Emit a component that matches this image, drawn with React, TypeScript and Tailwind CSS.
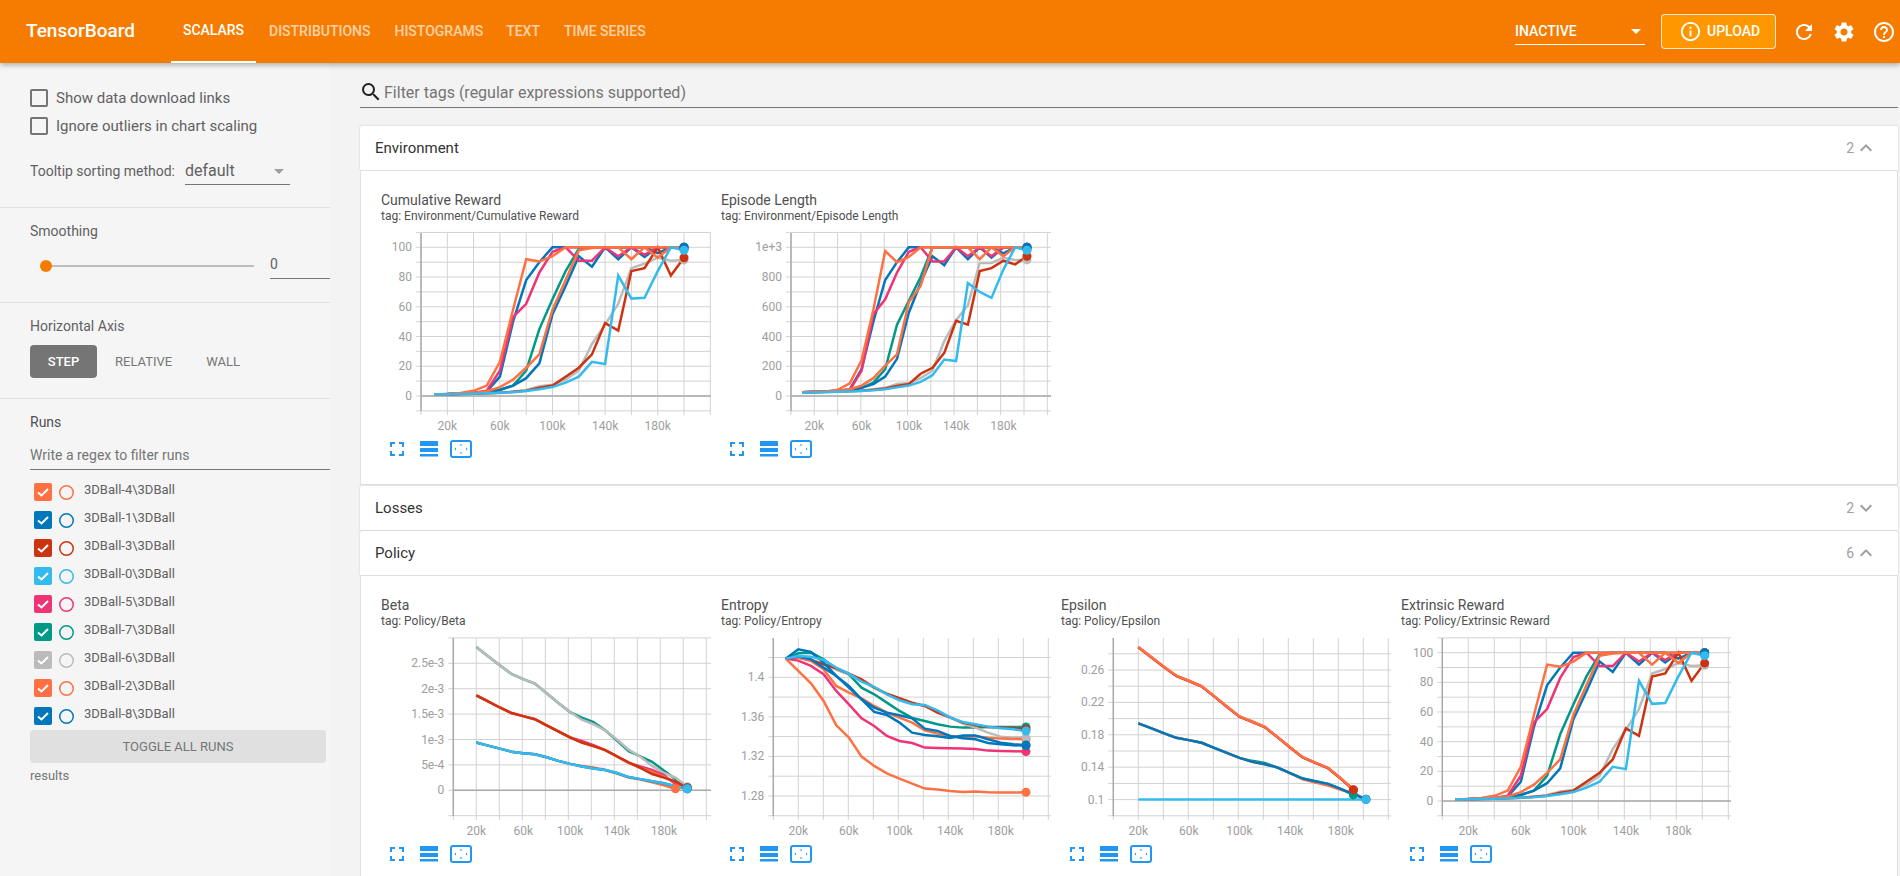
import { MdExpandLess, MdExpandMore, MdHelpOutline, MdInfoOutline, MdRefresh, MdSearch, MdSettings } from "react-icons/md";

const ORANGE = "#ff7043";
const BLUE = "#0077bb";
const RED = "#cc3311";
const CYAN = "#33bbee";
const PINK = "#ee3377";
const TEAL = "#009988";
const GRAY = "#bbbbbb";

const RUNS = [
  { name: "3DBall-4\\3DBall", color: ORANGE },
  { name: "3DBall-1\\3DBall", color: BLUE },
  { name: "3DBall-3\\3DBall", color: RED },
  { name: "3DBall-0\\3DBall", color: CYAN },
  { name: "3DBall-5\\3DBall", color: PINK },
  { name: "3DBall-7\\3DBall", color: TEAL },
  { name: "3DBall-6\\3DBall", color: GRAY },
  { name: "3DBall-2\\3DBall", color: ORANGE },
  { name: "3DBall-8\\3DBall", color: BLUE },
];

// end dots overlap, this is the stacking from bottom to top
const DOT_ORDER = [ORANGE, PINK, GRAY, TEAL, RED, BLUE, CYAN];

type Series = { c: string; d: number[]; s?: number };

type ChartProps = {
  title: string;
  tag: string;
  axisX: number;
  x20: number;
  step: number;
  y: (v: number) => number;
  grid: number[];
  ticks: [number, string][];
  zero?: boolean;
  series: Series[];
};

const reward: Series[] = [
  { c: GRAY, d: [1, 1.1, 1.3, 1.5, 1.8, 2.2, 2.8, 4, 6.5, 7.5, 11, 17, 35, 48, 62, 86, 89, 93, 91, 91.5] },
  { c: TEAL, d: [1, 1.2, 1.5, 1.8, 2.5, 4, 7, 17, 45, 65, 84, 99, 100, 100, 100, 100, 100, 100, 100, 100] },
  { c: BLUE, d: [1, 1.2, 1.5, 1.8, 2.5, 4.2, 7, 12, 22, 55, 74, 94, 87, 100, 92, 100, 93.5, 100, 100, 99] },
  { c: BLUE, d: [1, 1.3, 1.8, 2.2, 3, 13, 50, 78, 90, 100, 100, 100, 100, 100, 100, 100, 100, 96, 100, 100] },
  { c: PINK, d: [1, 1.3, 1.7, 2, 3.5, 17, 53, 62, 83, 97, 100, 91, 91, 100, 94, 100, 95, 100, 100, 100] },
  { c: RED, d: [1, 1.1, 1.3, 1.5, 1.8, 2.2, 2.8, 3.5, 5.5, 7, 13, 19, 28, 49, 44, 84, 86, 100, 81, 93] },
  { c: ORANGE, d: [1, 1.2, 1.6, 2, 3, 6, 11, 19, 28, 58, 78, 98, 99.5, 100, 100, 92, 100, 93, 100, 100] },
  { c: ORANGE, d: [1, 1.3, 2, 3.5, 7, 23, 58, 92, 90.5, 94, 100, 100, 100, 100, 100, 100, 100, 100, 100, 100] },
  { c: CYAN, d: [1, 1.1, 1.3, 1.5, 1.8, 2.2, 2.6, 3.3, 4.5, 6, 9, 13, 23, 21.5, 81, 65.5, 66, 84, 100, 98] },
];

const episode: Series[] = [
  { c: GRAY, d: [25, 26, 28, 30, 33, 36, 45, 55, 80, 85, 120, 170, 370, 510, 610, 895, 895, 930, 915, 915] },
  { c: TEAL, d: [25, 27, 30, 33, 40, 55, 90, 180, 480, 640, 800, 1000, 1000, 1000, 1000, 1000, 1000, 1000, 1000, 1000] },
  { c: BLUE, d: [25, 27, 30, 33, 38, 55, 80, 130, 250, 560, 760, 940, 880, 1000, 920, 1000, 930, 1000, 1000, 990] },
  { c: BLUE, d: [25, 28, 30, 35, 45, 180, 500, 780, 900, 1000, 1000, 1000, 1000, 1000, 1000, 1000, 1000, 960, 1000, 1000] },
  { c: PINK, d: [25, 28, 30, 35, 40, 170, 550, 650, 830, 970, 1000, 905, 905, 1000, 940, 1000, 940, 1000, 1000, 1000] },
  { c: RED, d: [25, 26, 28, 30, 33, 36, 42, 50, 68, 80, 150, 190, 290, 505, 480, 840, 860, 910, 885, 940] },
  { c: ORANGE, d: [25, 27, 30, 33, 45, 70, 120, 205, 280, 630, 740, 1000, 1000, 1000, 1000, 920, 1000, 940, 1000, 990] },
  { c: ORANGE, d: [25, 28, 30, 42, 85, 240, 580, 975, 900, 935, 1000, 1000, 1000, 1000, 1000, 1000, 1000, 1000, 1000, 1000] },
  { c: CYAN, d: [22, 24, 26, 28, 30, 33, 38, 45, 58, 70, 95, 140, 245, 235, 760, 700, 660, 850, 1000, 980] },
];

const betaA = [2.82, 2.64, 2.46, 2.29, 2.19, 2.1, 1.91, 1.72, 1.54, 1.43, 1.34, 1.18, 0.98, 0.77, 0.67, 0.56, 0.39, 0.22, 0.05];
const betaB = [1.87, 1.75, 1.63, 1.52, 1.46, 1.4, 1.28, 1.16, 1.04, 0.94, 0.87, 0.79, 0.67, 0.55, 0.44, 0.32, 0.25, 0.17, 0.05];
const betaC = [0.94, 0.88, 0.82, 0.76, 0.73, 0.71, 0.65, 0.58, 0.52, 0.47, 0.43, 0.4, 0.34, 0.26, 0.22, 0.18, 0.14, 0.08, 0.03];

const beta: Series[] = [
  { c: TEAL, s: 2, d: betaA },
  { c: GRAY, s: 2, d: [2.82, 2.64, 2.46, 2.29, 2.19, 2.1, 1.91, 1.72, 1.54, 1.39, 1.3, 1.18, 1.0, 0.8, 0.66, 0.48, 0.34, 0.25, 0.07] },
  { c: PINK, s: 2, d: [1.87, 1.75, 1.63, 1.52, 1.46, 1.4, 1.28, 1.16, 1.04, 0.97, 0.89, 0.79, 0.67, 0.54, 0.47, 0.4, 0.3, 0.12, 0.03] },
  { c: ORANGE, s: 2, d: [1.87, 1.75, 1.63, 1.52, 1.46, 1.4, 1.28, 1.16, 1.04, 0.94, 0.87, 0.79, 0.66, 0.54, 0.44, 0.36, 0.27, 0.16, 0.04] },
  { c: RED, s: 2, d: betaB },
  { c: ORANGE, s: 2, d: [0.94, 0.88, 0.82, 0.76, 0.73, 0.71, 0.65, 0.58, 0.52, 0.48, 0.45, 0.4, 0.33, 0.25, 0.21, 0.16, 0.1, 0.03] },
  { c: BLUE, s: 2, d: betaC },
  { c: CYAN, s: 2, d: betaC },
];

// entropy and epsilon curves were read off the plot, so they go through the axis scale
const ent = (ys: number[]) => ys.map((y) => 1.4 - ((y - 259) / 118.7) * 0.04);
const entropy: Series[] = [
  { c: TEAL, d: ent([203, 187, 185, 205, 235, 250, 290, 310, 335, 360, 381, 390, 400, 407, 410, 410, 408, 408, 408, 408]) },
  { c: GRAY, d: ent([203, 198, 205, 220, 235, 250, 270, 290, 310, 325, 338, 345, 360, 378, 398, 410, 425, 437, 440, 440]) },
  { c: RED, d: ent([203, 200, 208, 220, 232, 248, 265, 290, 308, 322, 335, 345, 365, 380, 395, 403, 408, 410, 412, 415]) },
  { c: ORANGE, d: ent([203, 200, 210, 235, 285, 305, 322, 345, 365, 380, 395, 418, 428, 435, 438, 436, 440, 443, 444, 445]) },
  { c: PINK, d: ent([203, 209, 225, 250, 300, 340, 382, 405, 435, 450, 456, 470, 471, 472, 473, 474, 479, 480, 481, 482]) },
  { c: BLUE, d: ent([203, 197, 205, 230, 255, 285, 325, 350, 365, 373, 382, 413, 420, 435, 442, 445, 456, 460, 463, 464]) },
  { c: BLUE, d: ent([203, 175, 183, 215, 255, 290, 325, 363, 372, 395, 425, 432, 436, 441, 434, 434, 445, 455, 460, 462]) },
  { c: ORANGE, d: ent([203, 240, 277, 330, 403, 440, 497, 525, 547, 563, 578, 593, 596, 600, 603, 602, 604, 605, 605, 604]) },
  { c: CYAN, d: ent([203, 195, 197, 207, 230, 248, 272, 288, 310, 328, 340, 342, 358, 380, 393, 400, 407, 412, 415, 420]) },
];

const eps = (ys: number[]) => ys.map((y) => 0.1 + ((626 - y) / 97) * 0.04);
const epsTop = eps([170, 199, 228, 256, 271, 287, 317, 348, 378, 393, 409, 439, 470, 500, 516, 532, 563, 597]);
const epsMid = eps([398, 412, 427, 441, 448, 456, 471, 486, 501, 513, 520, 530, 547, 563, 571, 579, 594, 610, 625]);
const epsilon: Series[] = [
  { c: TEAL, s: 2, d: eps([398, 412, 427, 441, 448, 456, 471, 486, 501, 510, 516, 530, 547, 563, 571, 579, 594, 612]) },
  { c: ORANGE, s: 2, d: eps([398, 412, 427, 441, 448, 456, 471, 486, 501, 513, 520, 530, 547, 565, 575, 584, 597, 606, 625]) },
  { c: BLUE, s: 2, d: epsMid },
  { c: PINK, s: 2, d: epsTop },
  { c: RED, s: 2, d: epsTop },
  { c: ORANGE, s: 2, d: epsTop.map((v) => v + 0.0003) },
  { c: CYAN, s: 2, d: new Array(19).fill(0.1) },
];

const range = (from: number, to: number, by: number) => {
  const out: number[] = [];
  for (let v = from; v <= to + 1e-9; v += by) out.push(v);
  return out;
};

const CHARTS_ENV: ChartProps[] = [
  {
    title: "Cumulative Reward",
    tag: "tag: Environment/Cumulative Reward",
    axisX: 40,
    x20: 66.3,
    step: 13.15,
    y: (v) => 14.3 + (100 - v) * 1.487,
    grid: range(-10, 110, 10),
    ticks: [[100, "100"], [80, "80"], [60, "60"], [40, "40"], [20, "20"], [0, "0"]],
    zero: true,
    series: reward,
  },
  {
    title: "Episode Length",
    tag: "tag: Environment/Episode Length",
    axisX: 70,
    x20: 93.3,
    step: 11.815,
    y: (v) => 14.3 + (1000 - v) * 0.1487,
    grid: range(-100, 1100, 100),
    ticks: [[1000, "1e+3"], [800, "800"], [600, "600"], [400, "400"], [200, "200"], [0, "0"]],
    zero: true,
    series: episode,
  },
];

const CHARTS_POLICY: ChartProps[] = [
  {
    title: "Beta",
    tag: "tag: Policy/Beta",
    axisX: 72.3,
    x20: 95.3,
    step: 11.72,
    y: (v) => 25.3 + (2.5 - v) * 50.8,
    grid: range(-0.5, 3, 0.5),
    ticks: [[2.5, "2.5e-3"], [2, "2e-3"], [1.5, "1.5e-3"], [1, "1e-3"], [0.5, "5e-4"], [0, "0"]],
    zero: true,
    series: beta,
  },
  {
    title: "Entropy",
    tag: "tag: Policy/Entropy",
    axisX: 52.3,
    x20: 77.3,
    step: 12.65,
    y: (v) => 39.3 + (1.4 - v) * 989,
    grid: range(1.26, 1.42, 0.02),
    ticks: [[1.4, "1.4"], [1.36, "1.36"], [1.32, "1.32"], [1.28, "1.28"]],
    series: entropy,
  },
  {
    title: "Epsilon",
    tag: "tag: Policy/Epsilon",
    axisX: 52.3,
    x20: 77.3,
    step: 12.65,
    y: (v) => 32 + (0.26 - v) * 810,
    grid: range(0.08, 0.28, 0.02),
    ticks: [[0.26, "0.26"], [0.22, "0.22"], [0.18, "0.18"], [0.14, "0.14"], [0.1, "0.1"]],
    series: epsilon,
  },
  {
    title: "Extrinsic Reward",
    tag: "tag: Policy/Extrinsic Reward",
    axisX: 41.3,
    x20: 67.3,
    step: 13.13,
    y: (v) => 14.7 + (100 - v) * 1.483,
    grid: range(-10, 110, 10),
    ticks: [[100, "100"], [80, "80"], [60, "60"], [40, "40"], [20, "20"], [0, "0"]],
    zero: true,
    series: reward,
  },
];

const Caret = ({ className }: { className: string }) => (
  <svg width="10" height="5" viewBox="0 0 10 5" className={className}>
    <path d="M0 0h10L5 5z" fill="currentColor" />
  </svg>
);

const ChartIcons = () => (
  <div className="flex items-center h-[18px] pl-[9px] text-[#2196f3]">
    <svg width="14" height="14" viewBox="0 0 14 14" fill="none" stroke="currentColor" strokeWidth="2">
      <path d="M1 5V1h4M9 1h4v4M13 9v4H9M5 13H1V9" />
    </svg>
    <svg width="18" height="16" viewBox="0 0 18 16" fill="currentColor" className="ml-4">
      <rect width="18" height="5" />
      <rect y="7" width="18" height="4" />
      <rect y="13" width="18" height="2.5" />
    </svg>
    <svg width="22" height="18" viewBox="0 0 22 18" fill="none" className="ml-3">
      <rect x="1" y="1" width="20" height="16" rx="2" stroke="currentColor" strokeWidth="2" />
      <path d="M11 4l1.5 1.5h-3zM11 14l1.5-1.5h-3zM4.5 9L6 7.5v3zM17.5 9L16 7.5v3z" fill="currentColor" />
    </svg>
  </div>
);

const Chart = ({ title, tag, axisX, x20, step, y, grid, ticks, zero, series }: ChartProps) => {
  const xAt = (k: number) => x20 + (k - 2) * step;
  const verticals = range(0, 22, 2).map((k) => axisX + (k * (x20 - axisX)) / 2);
  const dots = [...series].sort((a, b) => DOT_ORDER.indexOf(a.c) - DOT_ORDER.indexOf(b.c));

  return (
    <div className="w-[340px] shrink-0 pl-5">
      <div className="h-[18px] text-[14px] leading-[18px] text-[#505050]">{title}</div>
      <div className="h-[15px] text-[12px] leading-[15px] text-[#505050] mb-[9px]">{tag}</div>
      <svg width="330" height="207" className="block overflow-visible">
        {verticals.map((x) => (
          <line key={x} x1={x} x2={x} y1="0" y2="182" stroke="#d2d2d2" />
        ))}
        {grid.map((v) => (
          <line key={v} x1={axisX - 5} x2="330" y1={y(v)} y2={y(v)} stroke="#d2d2d2" />
        ))}
        <line x1={axisX} x2={axisX} y1="0" y2="178" stroke="#aaaaaa" strokeWidth="1.5" />
        {zero && <line x1={axisX} x2="330" y1={y(0)} y2={y(0)} stroke="#aaaaaa" strokeWidth="1.5" />}
        {ticks.map(([v, label]) => (
          <text key={label} x={axisX - 9} y={y(v) + 4} textAnchor="end" className="text-[12px] fill-[#9e9e9e]">
            {label}
          </text>
        ))}
        {[2, 6, 10, 14, 18].map((k) => (
          <text key={k} x={xAt(k)} y="197" textAnchor="middle" className="text-[12px] fill-[#9e9e9e]">
            {k}0k
          </text>
        ))}
        {series.map((s, i) => (
          <polyline
            key={i}
            fill="none"
            stroke={s.c}
            strokeWidth="2.5"
            points={s.d.map((v, j) => `${xAt(j + (s.s ?? 1))},${y(v)}`).join(" ")}
          />
        ))}
        {dots.map((s, i) => (
          <circle key={i} cx={xAt(s.d.length - 1 + (s.s ?? 1))} cy={y(s.d[s.d.length - 1])} r="4.5" fill={s.c} />
        ))}
      </svg>
      <ChartIcons />
    </div>
  );
};

const SectionHeader = ({ name, count, open }: { name: string; count: number; open: boolean }) => (
  <div className="h-11 flex items-center bg-white pl-[15px] pr-[20px] rounded-t-[2px] shadow-[0_0_2px_rgba(0,0,0,0.2)] text-[15px] text-[#333333]">
    <span className="grow">{name}</span>
    <span className="text-[14px] text-[#9e9e9e]">{count}</span>
    {open ? <MdExpandLess className="text-[24px] text-[#9e9e9e]" /> : <MdExpandMore className="text-[24px] text-[#9e9e9e]" />}
  </div>
);

const RunRow = ({ name, color }: { name: string; color: string }) => (
  <div className="h-7 flex items-start">
    <div className="w-[18px] h-[18px] ml-1 rounded-[2px] flex items-center justify-center" style={{ background: color }}>
      <svg width="18" height="18" viewBox="0 0 18 18" fill="none" stroke="#fff" strokeWidth="2">
        <path d="M4 9.5l3.5 3L14 6" />
      </svg>
    </div>
    <svg width="15" height="15" viewBox="0 0 15 15" fill="none" className="ml-[7px] mt-[2px]">
      <circle cx="7.5" cy="7.5" r="6.75" stroke={color} strokeWidth="1.5" />
    </svg>
    <span className="ml-[10px] text-[13px] leading-[14px] text-[#616161]">{name}</span>
  </div>
);

const App = () => {
  return (
    <div className="w-[1900px] h-[876px] overflow-hidden flex flex-col bg-[#f5f5f5] font-['Roboto',sans-serif]">
      <header className="relative z-10 h-[63px] shrink-0 flex items-center bg-[#f57c00] text-white shadow-[0_2px_5px_rgba(0,0,0,0.3)]">
        <div className="w-[171px] pl-[26px] text-[19px] font-medium">TensorBoard</div>
        <nav className="flex self-stretch text-[14px] font-medium">
          <div className="px-[12px] w-[85px] flex items-center justify-center border-b-2 border-white">SCALARS</div>
          <div className="px-[13px] flex items-center text-white/65">DISTRIBUTIONS</div>
          <div className="px-[11px] flex items-center text-white/65">HISTOGRAMS</div>
          <div className="px-[12px] flex items-center text-white/65">TEXT</div>
          <div className="px-[12px] flex items-center text-white/65">TIME SERIES</div>
        </nav>
        <div className="ml-auto w-[130px] h-[27px] mr-4 flex items-center justify-between border-b border-white text-[14px] font-medium">
          INACTIVE
          <Caret className="mr-1" />
        </div>
        <button className="w-[115px] h-[35px] flex items-center pl-[17px] rounded-[4px] border border-white/80 bg-[#ff9800] text-[14px] font-medium">
          <MdInfoOutline className="text-[23px]" />
          <span className="ml-[5px]">UPLOAD</span>
        </button>
        <MdRefresh className="ml-4 text-[24px]" />
        <MdSettings className="ml-4 text-[24px]" />
        <MdHelpOutline className="ml-4 mr-1 text-[24px]" />
      </header>

      <div className="flex grow min-h-0">
        <aside className="w-[330px] shrink-0 text-[14px] text-[#616161]">
          <div className="h-[145px] pl-[30px] pt-[26px] border-b border-[#e0e0e0]">
            <label className="flex items-center h-[18px] gap-2">
              <span className="w-[18px] h-[18px] rounded-[2px] border-2 border-[#757575]" />
              <span className="text-[15px]">Show data download links</span>
            </label>
            <label className="flex items-center h-[18px] gap-2 mt-[10px]">
              <span className="w-[18px] h-[18px] rounded-[2px] border-2 border-[#757575]" />
              <span className="text-[15px]">Ignore outliers in chart scaling</span>
            </label>
            <div className="flex items-center mt-[23px]">
              <span className="w-[155px]">Tooltip sorting method:</span>
              <div className="w-[105px] h-[27px] flex items-center justify-between border-b border-[#757575] text-[16px] pr-1">
                default
                <Caret className="text-[#9e9e9e] mr-[2px]" />
              </div>
            </div>
          </div>
          <div className="h-[95px] pl-[30px] pt-[14px] border-b border-[#e0e0e0]">
            <div className="h-[18px] leading-[18px]">Smoothing</div>
            <div className="flex items-center mt-[13px]">
              <span className="w-3 h-3 ml-[10px] rounded-full bg-[#f57c00]" />
              <span className="w-[202px] h-[2px] bg-[#bdbdbd]" />
              <div className="ml-4 w-[60px] h-[26px] leading-[22px] border-b border-[#757575] text-[#616161]">0</div>
            </div>
          </div>
          <div className="h-[96px] pl-[30px] pt-[14px] border-b border-[#e0e0e0]">
            <div className="h-[18px] leading-[18px]">Horizontal Axis</div>
            <div className="flex items-center mt-[10px] text-[13px] font-medium text-[#757575]">
              <span className="w-[67px] h-[33px] flex items-center justify-center rounded-[4px] bg-[#757575] text-white">STEP</span>
              <span className="ml-[18px] font-normal">RELATIVE</span>
              <span className="ml-[34px] font-normal">WALL</span>
            </div>
          </div>
          <div className="pl-[30px] pt-[14px]">
            <div className="h-[18px] leading-[18px] text-[#505050]">Runs</div>
            <div className="mt-[10px] h-[29px] leading-[28px] border-b border-[#757575] text-[14px] text-[#757575]">
              Write a regex to filter runs
            </div>
            <div className="mt-[13px]">
              {RUNS.map((r) => (
                <RunRow key={r.name} name={r.name} color={r.color} />
              ))}
            </div>
            <div className="w-[296px] h-[33px] -mt-[5px] flex items-center justify-center rounded-[4px] bg-[#e0e0e0] text-[13px] text-[#757575]">
              TOGGLE ALL RUNS
            </div>
            <div className="mt-[3px] text-[13px] text-[#757575]">results</div>
          </div>
        </aside>

        <main className="grow min-w-0 pl-[30px] pr-[2px] bg-[#f3f3f3]">
          <div className="h-[45px] flex items-end pb-[3px] border-b border-[#757575] text-[16px] text-[#757575]">
            <MdSearch className="text-[24px] text-[#212121] -ml-[1px] mr-[1px]" />
            <span className="leading-[22px]">Filter tags (regular expressions supported)</span>
          </div>
          <section className="mt-[18px]">
            <SectionHeader name="Environment" count={2} open />
            <div className="h-[315px] pt-5 flex border border-[#e0e0e0] bg-white">
              {CHARTS_ENV.map((c) => (
                <Chart key={c.title} {...c} />
              ))}
            </div>
          </section>
          <section className="mt-[1px]">
            <SectionHeader name="Losses" count={2} open={false} />
          </section>
          <section className="mt-[1px]">
            <SectionHeader name="Policy" count={6} open />
            <div className="h-[315px] pt-5 flex border border-[#e0e0e0] bg-white">
              {CHARTS_POLICY.map((c) => (
                <Chart key={c.title} {...c} />
              ))}
            </div>
          </section>
        </main>
      </div>
    </div>
  );
};

export default App;
